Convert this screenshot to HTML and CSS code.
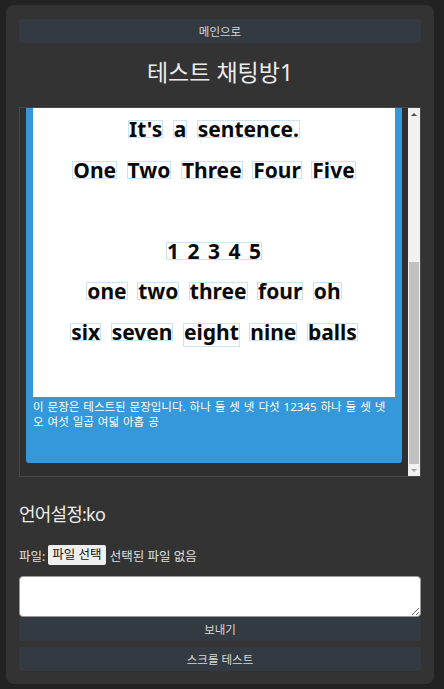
FILE: index.html
```html
<!DOCTYPE html>
<html lang="ko">
<head>
<meta charset="utf-8">
<title>테스트 채팅방1</title>
<link rel="stylesheet" href="styles.css">
</head>
<body>
<div class="app">
  <button class="btn">메인으로</button>
  <h1 class="title">테스트 채팅방1</h1>
  <div class="chat">
    <div class="chat-view">
      <div class="chat-inner">
        <div class="msg">
          <div class="pic">
            <div class="line"><span class="w">It's</span> <span class="w">a</span> <span class="w">sentence.</span></div>
            <div class="line"><span class="w">One</span> <span class="w">Two</span> <span class="w">Three</span> <span class="w">Four</span> <span class="w">Five</span></div>
            <div class="line"></div>
            <div class="line"><span class="w nums">1 2 3 4 5</span></div>
            <div class="line"><span class="w">one</span> <span class="w">two</span> <span class="w">three</span> <span class="w">four</span> <span class="w">oh</span></div>
            <div class="line"><span class="w">six</span> <span class="w">seven</span> <span class="w desc">eight</span> <span class="w">nine</span> <span class="w">balls</span></div>
          </div>
          <p class="msg-text">이 문장은 테스트된 문장입니다. 하나 둘 셋 넷 다섯 12345 하나 둘 셋 넷 오 여섯 일곱 여덟 아홉 공</p>
        </div>
      </div>
    </div>
    <div class="scrollbar">
      <div class="sb-btn"><span class="arrow up"></span></div>
      <div class="sb-track"><div class="sb-thumb"></div></div>
      <div class="sb-btn"><span class="arrow down"></span></div>
    </div>
  </div>
  <div class="lang">언어설정:ko</div>
  <div class="file-row"><span>파일:</span><span class="file-btn">파일 선택</span><span>선택된 파일 없음</span></div>
  <textarea class="input"></textarea>
  <button class="btn">보내기</button>
  <button class="btn gap">스크롤 테스트</button>
</div>
</body>
</html>
```

FILE: styles.css
```css
* { box-sizing: border-box; }
html, body { margin: 0; padding: 0; }
body {
  background: #222222;
  font-family: "Noto Sans", "Noto Sans CJK KR", sans-serif;
  color: #e6e6e6;
}
.app {
  margin: 5px 0 0 6px;
  width: 428px;
  background: #333333;
  border-radius: 8px;
  padding: 14px 13px 13px 13px;
  display: flex;
  flex-direction: column;
}
.btn {
  display: block;
  width: 100%;
  height: 24px;
  border: none;
  border-radius: 3px;
  background: #343a42;
  color: #d8d8d8;
  font-family: "Noto Sans", "Noto Sans CJK KR", sans-serif;
  font-size: 11.5px;
  padding: 0;
}
.btn.gap { margin-top: 6px; }
.title {
  margin: 14px 0 20px;
  font-size: 23px;
  line-height: 30px;
  font-weight: normal;
  text-align: center;
  color: #ececec;
}
.chat {
  height: 370px;
  border: 1px solid #464646;
  background: #2f2f2f;
  display: flex;
}
.chat-view {
  flex: 1;
  overflow: hidden;
  display: flex;
  flex-direction: column-reverse;
}
.scrollbar {
  width: 12px;
  flex: none;
  background: #f1f1f1;
  display: flex;
  flex-direction: column;
}
.sb-btn {
  height: 12px;
  flex: none;
  display: flex;
  align-items: center;
  justify-content: center;
}
.arrow {
  width: 0;
  height: 0;
  border-left: 3px solid transparent;
  border-right: 3px solid transparent;
}
.arrow.up { border-bottom: 3px solid #505050; }
.arrow.down { border-top: 3px solid #a3a3a3; }
.sb-track {
  flex: 1;
  display: flex;
  flex-direction: column;
  justify-content: flex-end;
  padding: 0 1px;
}
.sb-thumb {
  height: 202px;
  background: #c1c1c1;
}
.chat-inner {
  padding: 0 6px 13px 6px;
}
.msg {
  background: #3498db;
  border-radius: 3px;
  padding: 7px 7px 34px 7px;
}
.pic {
  background: #ffffff;
  height: 543px;
  padding-top: 255px;
  color: #0a0a0a;
  font-family: "Noto Sans", sans-serif;
  font-weight: bold;
  font-size: 21px;
  text-align: center;
  word-spacing: 4px;
}
.line {
  height: 40.5px;
  line-height: 40.5px;
}
.w {
  display: inline-block;
  line-height: 16px;
  height: 18px;
  border: 1px solid #c9e3f6;
  vertical-align: baseline;
}
.w.nums { word-spacing: 3px; }
.w.desc { height: 24px; }
.msg-text {
  margin: 2px 0 0;
  font-size: 11.5px;
  line-height: 15px;
  color: #ffffff;
  word-spacing: 1px;
}
.lang {
  margin-top: 25px;
  font-size: 18px;
  line-height: 24px;
  color: #ececec;
  letter-spacing: -0.8px;
}
.file-row {
  margin-top: 19px;
  height: 20px;
  display: flex;
  align-items: center;
  font-size: 12.5px;
  color: #e0e0e0;
}
.file-btn {
  margin: 0 4px 0 3px;
  height: 20px;
  line-height: 20px;
  padding: 0 4px;
  background: #efefef;
  color: #111111;
  border-radius: 2px;
}
.input {
  display: block;
  margin-top: 11px;
  width: 100%;
  height: 41px;
  border: 1px solid #9a9a9a;
  border-radius: 4px;
  background: #ffffff;
  resize: vertical;
}
```
